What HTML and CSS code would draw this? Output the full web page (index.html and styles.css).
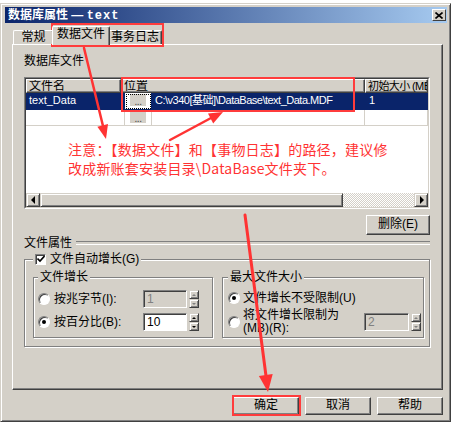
FILE: index.html
```html
<!DOCTYPE html>
<html lang="zh-CN">
<head>
  <meta charset="UTF-8">
  <title>数据库属性 — text</title>
  <link rel="stylesheet" href="styles.css">
</head>
<body>

  <div class="window">
    <div class="titlebar">
      <span class="title">数据库属性 — <span class="title-db">text</span></span>
      <span class="close">
        <svg width="8" height="7" viewBox="0 0 8 7"><path d="M0.5 0.5 L7.5 6.5 M7.5 0.5 L0.5 6.5" stroke="#000" stroke-width="1.6"/></svg>
      </span>
    </div>

    <div class="tabs">
      <div class="tab tab-first">常规</div>
      <div class="tab tab-active">数据文件</div>
      <div class="tab tab-last">事务日志</div>
    </div>

    <div class="panel">
      <div class="label">数据库文件</div>

      <div class="grid">
        <div class="grid-inner">
          <div class="grid-head">
            <div class="hcell h-name">文件名</div>
            <div class="hcell h-loc">位置</div>
            <div class="hcell h-size">初始大小 (MB</div>
          </div>
          <div class="grid-row selected">
            <div class="cell c-name">text_Data</div>
            <div class="cell c-btn"><span class="dots">...</span></div>
            <div class="cell c-path">C:\v340[基础]\DataBase\text_Data.MDF</div>
            <div class="cell c-size">1</div>
          </div>
          <div class="grid-row">
            <div class="cell c-name"></div>
            <div class="cell c-btn"><span class="dots">...</span></div>
            <div class="cell c-path"></div>
            <div class="cell c-size"></div>
          </div>
          <div class="grid-empty"></div>
          <div class="hscroll">
            <div class="raised sb-btn"><span class="tri tri-left"></span></div>
            <div class="raised sb-thumb"></div>
            <div class="sb-track"></div>
            <div class="raised sb-btn"><span class="tri tri-right"></span></div>
          </div>
        </div>
      </div>

      <div class="tools">
        <div class="btn btn-del">删除(E)</div>
      </div>

      <div class="sep">文件属性</div>

      <fieldset class="frame autogrow">
        <legend class="check-legend">
          <span class="check">
            <svg width="8" height="8" viewBox="0 0 8 8"><path d="M0.5 3.5 L3 6 L7.5 1" fill="none" stroke="#000" stroke-width="1.6"/></svg>
          </span>
          文件自动增长(G)
        </legend>

        <div class="groups">
          <fieldset class="frame group group-grow">
            <legend>文件增长</legend>
            <div class="opt">
              <span class="radio"></span>
              <span class="opt-label">按兆字节(I):</span>
              <div class="spin">
                <div class="spin-input disabled">1</div>
                <div class="spin-btns disabled">
                  <div class="raised spin-btn"><span class="tri tri-up"></span></div>
                  <div class="raised spin-btn"><span class="tri tri-down"></span></div>
                </div>
              </div>
            </div>
            <div class="opt">
              <span class="radio checked"></span>
              <span class="opt-label">按百分比(B):</span>
              <div class="spin">
                <div class="spin-input">10</div>
                <div class="spin-btns">
                  <div class="raised spin-btn"><span class="tri tri-up"></span></div>
                  <div class="raised spin-btn"><span class="tri tri-down"></span></div>
                </div>
              </div>
            </div>
          </fieldset>

          <fieldset class="frame group group-max">
            <legend>最大文件大小</legend>
            <div class="opt">
              <span class="radio checked"></span>
              <span class="opt-label">文件增长不受限制(U)</span>
            </div>
            <div class="opt opt-tall">
              <span class="radio"></span>
              <span class="opt-label">将文件增长限制为<br>(MB)(R):</span>
              <div class="spin">
                <div class="spin-input spin-wide disabled">2</div>
                <div class="spin-btns disabled">
                  <div class="raised spin-btn"><span class="tri tri-up"></span></div>
                  <div class="raised spin-btn"><span class="tri tri-down"></span></div>
                </div>
              </div>
            </div>
          </fieldset>
        </div>
      </fieldset>
    </div>

    <div class="footer">
      <div class="btn">确定</div>
      <div class="btn">取消</div>
      <div class="btn">帮助</div>
    </div>
  </div>

  <!-- 标注 -->
  <div class="note">注意：【数据文件】和【事物日志】的路径，建议修<br>改成新账套安装目录\DataBase文件夹下。</div>
  <div class="mark mark-tabs"></div>
  <div class="mark mark-path"></div>
  <div class="mark mark-ok"></div>
  <svg class="arrows" width="451" height="423" viewBox="0 0 451 423">
    <g fill="#ff3333" stroke="#ff3333" stroke-linecap="round">
      <line x1="84" y1="48" x2="103" y2="126" stroke-width="2.5"/>
      <polygon points="106,139 108,124 97.4,126.7" stroke="none"/>
      <line x1="170" y1="140" x2="211" y2="118" stroke-width="2.5"/>
      <polygon points="223,112 208,113.6 213.2,123.4" stroke="none"/>
      <line x1="245" y1="215" x2="266" y2="376" stroke-width="3"/>
      <polygon points="268,392 272.7,374 258.9,376" stroke="none"/>
    </g>
  </svg>

</body>
</html>
```

FILE: styles.css
```css
* {
  box-sizing: border-box;
}

body {
  margin: 0;
  width: 451px;
  height: 423px;
  overflow: hidden;
  position: relative;
  background: #fff;
  font: 12px/14px "Liberation Sans", "Noto Sans CJK SC", sans-serif;
  color: #000;
}

.window {
  margin-top: 3px;
  height: 419px;
  background: #d4d0c8;
  border: 1px solid;
  border-color: #d4d0c8 #404040 #404040 #d4d0c8;
  box-shadow: inset 1px 1px 0 #fff, inset -1px -1px 0 #808080;
  padding: 3px 3px 3px 4px;
}

.titlebar {
  height: 16px;
  display: flex;
  align-items: center;
  justify-content: space-between;
  padding: 0 1px 0 3px;
  background: linear-gradient(90deg, #0a246a, #a6caf0);
  color: #fff;
  font-weight: bold;
}

.title-db {
  font-family: "Liberation Mono", monospace;
  letter-spacing: 1px;
}

.close {
  width: 14px;
  height: 12px;
  display: flex;
  align-items: center;
  justify-content: center;
  background: #d4d0c8;
  border: 1px solid;
  border-color: #fff #404040 #404040 #fff;
}

.close svg {
  display: block;
}

/* tabs */
.tabs {
  display: flex;
  align-items: flex-end;
  height: 21px;
  padding-left: 8px;
  position: relative;
  z-index: 1;
}

.tab {
  height: 14px;
  border: 1px solid;
  border-bottom: 0;
  border-color: #fff #404040 #404040 #fff;
  border-radius: 2px 2px 0 0;
  box-shadow: inset -1px 0 0 #808080;
  background: #d4d0c8;
  text-align: center;
  line-height: 12px;
}

.tab-first {
  width: 41px;
}

.tab-active {
  width: 58px;
  height: 19px;
  margin: 0 -2px -1px;
  line-height: 15px;
  position: relative;
  z-index: 2;
}

.tab-last {
  width: 54px;
}

.panel {
  margin-left: 7px;
  width: 431px;
  height: 346px;
  border: 1px solid;
  border-color: #fff #404040 #404040 #fff;
  box-shadow: inset -1px -1px 0 #808080;
  padding: 0 12px 0 11px;
}

.label {
  margin-top: 9px;
}

/* file grid */
.grid {
  margin-top: 9px;
  height: 132px;
  border: 1px solid;
  border-color: #808080 #fff #fff #808080;
}

.grid-inner {
  height: 100%;
  border: 1px solid;
  border-color: #404040 #d4d0c8 #d4d0c8 #404040;
  background: #fff;
  display: flex;
  flex-direction: column;
  overflow: hidden;
}

.grid-head {
  display: flex;
  flex: none;
  height: 14px;
  background: #d4d0c8;
}

.hcell {
  height: 14px;
  border: 1px solid;
  border-color: #fff #404040 #404040 #fff;
  box-shadow: inset -1px -1px 0 #808080;
  padding-left: 2px;
  line-height: 12px;
  white-space: nowrap;
  overflow: hidden;
}

.h-name {
  width: 95px;
}

.h-loc {
  width: 244px;
}

.h-size {
  flex: 1;
  font-size: 11px;
  letter-spacing: -0.6px;
}

.grid-row {
  display: flex;
  flex: none;
  height: 16px;
  line-height: 15px;
  font-size: 11px;
}

.grid-row.selected {
  height: 17px;
}

.cell {
  border-right: 1px solid #d4d0c8;
  border-bottom: 1px solid #d4d0c8;
  padding-left: 3px;
  white-space: nowrap;
  overflow: hidden;
}

.selected .cell {
  background: #0a246a;
  border-color: #0a246a;
  color: #fff;
}

.c-name {
  width: 99px;
}

.c-btn {
  width: 27px;
  padding: 1px 0 0;
  display: flex;
  justify-content: center;
}

.selected .c-btn {
  background: #fff;
  outline: 1px dotted #000;
  outline-offset: -2px;
}

.dots {
  width: 16px;
  height: 12px;
  background: #d4d0c8;
  color: #404040;
  font-size: 10px;
  line-height: 15px;
  text-align: center;
  letter-spacing: -0.5px;
}

.c-path {
  width: 213px;
  letter-spacing: -0.5px;
}

.c-size {
  flex: 1;
  padding-left: 4px;
}

.grid-empty {
  flex: 1;
}

.hscroll {
  display: flex;
  flex: none;
  height: 14px;
}

.raised {
  background: #d4d0c8;
  border: 1px solid;
  border-color: #d4d0c8 #404040 #404040 #d4d0c8;
  box-shadow: inset 1px 1px 0 #fff, inset -1px -1px 0 #808080;
}

.sb-btn {
  width: 14px;
  display: flex;
  align-items: center;
  justify-content: center;
}

.sb-thumb {
  width: 303px;
}

.sb-track {
  flex: 1;
  background: repeating-conic-gradient(#d4d0c8 0 25%, #fff 0 50%) 0 0 / 2px 2px;
}

.tri {
  width: 0;
  height: 0;
  border: 4px solid transparent;
}

.tri-left {
  border-left: 0;
  border-right-color: #000;
  margin-left: -1px;
}

.tri-right {
  border-right: 0;
  border-left-color: #000;
  margin-left: 1px;
}

.tri-up,
.tri-down {
  border-width: 2px;
}

.tri-up {
  border-top: 0;
  border-bottom-color: #000;
}

.tri-down {
  border-bottom: 0;
  border-top-color: #000;
}

.disabled .tri-up {
  border-bottom-color: #808080;
}

.disabled .tri-down {
  border-top-color: #808080;
}

/* buttons */
.tools {
  display: flex;
  justify-content: flex-end;
  margin-top: 6px;
}

.btn {
  width: 66px;
  height: 18px;
  background: #d4d0c8;
  border: 1px solid;
  border-color: #fff #404040 #404040 #fff;
  box-shadow: inset -1px -1px 0 #808080;
  text-align: center;
  line-height: 15px;
}

.btn-del {
  width: 64px;
  height: 20px;
  line-height: 17px;
}

/* file properties */
.sep {
  display: flex;
  align-items: center;
  gap: 4px;
  margin-top: 1px;
  height: 14px;
}

.sep::after {
  content: "";
  flex: 1;
  height: 2px;
  border-top: 1px solid #808080;
  border-bottom: 1px solid #fff;
}

.frame {
  margin: 0;
  min-width: 0;
  border: 1px solid #808080;
  box-shadow: inset 1px 1px 0 #fff, 1px 1px 0 #fff;
}

.frame legend {
  padding: 0 2px;
  height: 14px;
  line-height: 14px;
  background: #d4d0c8;
}

.autogrow {
  margin-top: 2px;
  padding: 4px 5px 8px 8px;
}

.check-legend {
  display: flex;
  align-items: center;
  gap: 4px;
}

.check {
  width: 11px;
  height: 11px;
  background: #fff;
  border: 1px solid;
  border-color: #808080 #fff #fff #808080;
  box-shadow: inset 1px 1px 0 #404040;
  display: flex;
  align-items: center;
  justify-content: center;
}

.check svg {
  display: block;
}

.groups {
  display: flex;
  gap: 9px;
}

.group {
  padding: 6px 4px 6px 4px;
}

.group-grow {
  width: 180px;
}

.group-max {
  flex: 1;
  padding: 5px 2px 3px 5px;
}

.opt {
  display: flex;
  align-items: center;
  height: 18px;
}

.group-grow .opt + .opt {
  margin-top: 5px;
}

.group-max .opt + .opt {
  margin-top: 3px;
}

.opt-tall {
  height: 24px;
  line-height: 13px;
}

.radio {
  width: 12px;
  height: 12px;
  flex: none;
  border-radius: 50%;
  background: #fff;
  border: 1px solid;
  border-color: #808080 #fff #fff #808080;
  box-shadow: inset 1px 1px 0 #404040;
  display: flex;
  align-items: center;
  justify-content: center;
}

.radio.checked::after {
  content: "";
  width: 4px;
  height: 4px;
  border-radius: 50%;
  background: #000;
}

.group-grow .radio {
  margin-right: 4px;
}

.group-grow .opt-label {
  width: 89px;
}

.group-max .radio {
  margin-right: 3px;
}

.group-max .opt-label {
  flex: 1;
}

.spin {
  display: flex;
  gap: 2px;
}

.spin-input {
  width: 44px;
  height: 18px;
  background: #fff;
  border: 1px solid;
  border-color: #808080 #fff #fff #808080;
  box-shadow: inset 1px 1px 0 #404040;
  padding-left: 3px;
  line-height: 16px;
}

.spin-wide {
  width: 45px;
}

.spin-input.disabled {
  background: #d4d0c8;
  color: #808080;
}

.spin-btns {
  display: flex;
  flex-direction: column;
  width: 10px;
  height: 18px;
}

.spin-btn {
  height: 9px;
  display: flex;
  align-items: center;
  justify-content: center;
}

.footer {
  display: flex;
  justify-content: flex-end;
  gap: 6px;
  margin-top: 7px;
  padding-right: 4px;
}

/* annotations */
.note {
  position: absolute;
  left: 68px;
  top: 140px;
  font-family: "Noto Sans CJK SC", sans-serif;
  font-size: 14px;
  line-height: 18.5px;
  letter-spacing: 0.2px;
  color: #ff3333;
}

.mark {
  position: absolute;
  border: 2px solid #ff3c3c;
}

.mark-tabs {
  left: 51px;
  top: 23px;
  width: 113px;
  height: 24px;
}

.mark-path {
  left: 121px;
  top: 77px;
  width: 234px;
  height: 35px;
}

.mark-ok {
  left: 232px;
  top: 395px;
  width: 69px;
  height: 21px;
}

.arrows {
  position: absolute;
  left: 0;
  top: 0;
  pointer-events: none;
}
```
